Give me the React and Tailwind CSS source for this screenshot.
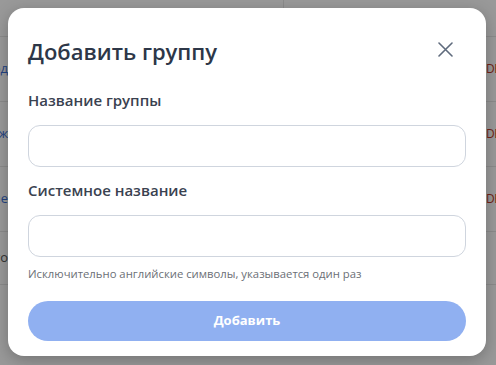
import React from 'react';

const rows = [
  { left: 'Код', right: 'DELETE' },
  { left: 'Монтаж', right: 'DELETE' },
  { left: 'Отделение', right: 'DELETE' },
];

const Field = ({ label, hint }) => (
  <div className="flex flex-col">
    <label className="text-[15px] leading-[22px] font-semibold text-[#3a4250]">{label}</label>
    <input
      type="text"
      className="mt-[14px] h-[42px] w-full rounded-[12px] border border-[#cfd5de] bg-white px-3 outline-none"
    />
    {hint && (
      <p className="mt-[9px] text-[11.3px] leading-4 text-[#6b6f76]">{hint}</p>
    )}
  </div>
);

export default function App() {
  return (
    <div className="relative w-[496px] h-[365px] overflow-hidden bg-white font-['Open_Sans',sans-serif]">
      {/* table behind the overlay */}
      <div className="flex flex-col">
        <div className="h-[37px] border-b border-[#e8e8e8] flex">
          <div className="w-[284px] border-r border-[#e8e8e8]"></div>
        </div>
        {rows.map((r) => (
          <div key={r.left} className="h-[65px] border-b border-[#e8e8e8] flex items-center justify-between text-[13px]">
            <div className="w-[8px] overflow-hidden flex justify-end">
              <span className="whitespace-nowrap text-[#3b6fd8]">{r.left}</span>
            </div>
            <div className="w-[10px] overflow-hidden">
              <span className="whitespace-nowrap text-[12px] tracking-[-0.5px] text-[#c0392b]">{r.right}</span>
            </div>
          </div>
        ))}
        <div className="h-[53px] border-b border-[#e8e8e8] flex items-center text-[13px]">
          <div className="w-[8px] overflow-hidden flex justify-end">
            <span className="whitespace-nowrap text-[#555]">Итого</span>
          </div>
        </div>
        <div className="flex-1 h-[80px] bg-[#ececec]"></div>
      </div>

      {/* overlay */}
      <div className="absolute inset-0 bg-black/40 flex items-start justify-start pt-2 pl-2">
        <div className="w-[478px] h-[348px] bg-white rounded-[16px] shadow-[0_4px_16px_rgba(0,0,0,0.25)] px-5 pt-[29px] pb-[15px] flex flex-col">
          <div className="flex items-start justify-between">
            <h2 className="text-[22px] leading-[29px] font-semibold text-[#2d3748]">Добавить группу</h2>
            <button className="mt-[5px] mr-[13px] w-[15px] h-[15px] flex items-center justify-center">
              <svg width="15" height="15" viewBox="0 0 15 15" fill="none" stroke="#5f6b7d" strokeWidth="1.6" strokeLinecap="round">
                <path d="M1 1L14 14M14 1L1 14" />
              </svg>
            </button>
          </div>

          <div className="mt-[23px] flex flex-col gap-[12px]">
            <Field label="Название группы" />
            <Field
              label="Системное название"
              hint="Исключительно английские символы, указывается один раз"
            />
          </div>

          <button
            disabled
            className="mt-auto h-10 w-full rounded-full bg-[#90b0f1] text-white text-[13px] font-bold"
          >
            Добавить
          </button>
        </div>
      </div>
    </div>
  );
}
